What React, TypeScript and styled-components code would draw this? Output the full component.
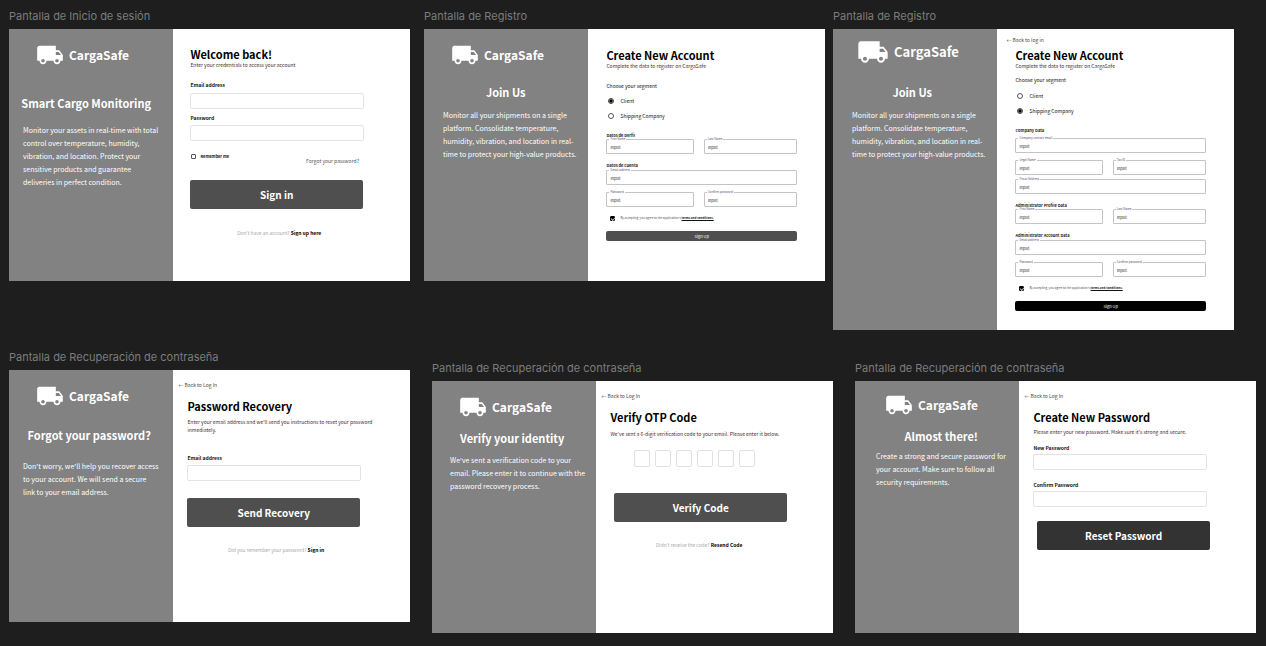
import React, { useId } from "react";
import styled, { createGlobalStyle } from "styled-components";
import { MdLocalShipping } from "react-icons/md";

const sans = `"Noto Sans CJK SC", "Noto Sans", sans-serif`;

const GlobalStyle = createGlobalStyle`
  * { box-sizing: border-box; }
  body { margin: 0; background: #1e1e1e; font-family: ${sans}; }
  button, input { font-family: inherit; margin: 0; }
  h2, h3, p { margin: 0; }
`;

/* ---------- canvas ---------- */

const Canvas = styled.main`
  background: #1e1e1e;
  min-height: 100vh;
  padding: 8px 0 12px;
  overflow: hidden;
`;

const BoardRow = styled.div<{ $top?: number; $right: number }>`
  display: flex;
  align-items: flex-start;
  padding-left: 9px;
  padding-right: ${(p) => p.$right}px;
  margin-top: ${(p) => p.$top ?? 0}px;
`;

const Board = styled.section<{ $gap?: number; $drop?: number }>`
  flex: 1 1 0;
  min-width: 0;
  margin-left: ${(p) => p.$gap ?? 0}px;
  margin-top: ${(p) => p.$drop ?? 0}px;
`;

const BoardName = styled.div`
  font-family: Inter, sans-serif;
  font-size: 11px;
  line-height: 16px;
  height: 21px;
  color: #7c7c7c;
  white-space: nowrap;
`;

const Frame = styled.div`
  display: grid;
  grid-template-columns: 41fr 59fr;
  min-height: 252px;
  background: #fff;
`;

/* ---------- brand side ---------- */

const Brand = styled.aside`
  background: #828282;
  color: #fff;
  min-width: 0;
`;

const Logo = styled.div<{ $top: number; $left: number; $large?: boolean }>`
  display: flex;
  align-items: center;
  gap: 5px;
  padding-top: ${(p) => p.$top}px;
  padding-left: ${(p) => p.$left}px;
  font-size: ${(p) => (p.$large ? 13 : 12)}px;
  font-weight: 700;
  line-height: 16px;

  svg {
    display: block;
    flex: none;
    width: ${(p) => (p.$large ? 32 : 28)}px;
    height: ${(p) => (p.$large ? 32 : 28)}px;
  }
`;

const Copy = styled.div<{ $left: number; $right: number }>`
  padding-left: ${(p) => p.$left}px;
  padding-right: ${(p) => p.$right}px;
`;

const Headline = styled.h2<{ $top: number }>`
  margin-top: ${(p) => p.$top}px;
  display: flex;
  justify-content: center;
  font-size: 11px;
  font-weight: 700;
  line-height: 16px;
  white-space: nowrap;
`;

const Pitch = styled.p<{ $top: number }>`
  margin-top: ${(p) => p.$top}px;
  font-size: 7px;
  line-height: 13px;
  white-space: pre;
`;

/* ---------- form side ---------- */

type Top = { $top?: number };

const Form = styled.form<{ $right: number; $left: number }>`
  display: flex;
  flex-direction: column;
  min-width: 0;
  padding: 0 ${(p) => p.$right}px 19px ${(p) => p.$left}px;
`;

const Title = styled.h3<Top>`
  margin-top: ${(p) => p.$top ?? 0}px;
  font-size: 11px;
  font-weight: 700;
  line-height: 12px;
  color: #000;
  white-space: nowrap;
`;

const Subtitle = styled.p<Top>`
  margin-top: ${(p) => p.$top ?? 0}px;
  font-size: 5px;
  line-height: 8px;
  color: #4a2b30;
  white-space: pre;
`;

const BackLink = styled.a<Top>`
  margin-top: ${(p) => p.$top ?? 0}px;
  margin-left: -9px;
  align-self: flex-start;
  font-size: 5px;
  line-height: 8px;
  color: #444;
  text-decoration: none;
`;

const Label = styled.label<Top>`
  margin-top: ${(p) => p.$top ?? 0}px;
  font-size: 5px;
  font-weight: 700;
  line-height: 8px;
  color: #111;
`;

const TextBox = styled.input<Top>`
  margin-top: ${(p) => p.$top ?? 0}px;
  width: 100%;
  height: 16px;
  padding: 0 4px;
  font-size: 6px;
  background: #fff;
  border: 1px solid #e3e3e3;
  border-radius: 2px;
  outline: none;
`;

const PrimaryButton = styled.button<Top & { $dark?: boolean; $shift?: number }>`
  margin-top: ${(p) => p.$top ?? 0}px;
  margin-left: ${(p) => p.$shift ?? 0}px;
  margin-right: ${(p) => 1 - (p.$shift ?? 0)}px;
  height: 29px;
  padding: 0;
  border: 0;
  border-radius: 2px;
  background: ${(p) => (p.$dark ? "#333" : "#4f4f4f")};
  color: #fff;
  font-size: 10px;
  font-weight: 700;
  line-height: 16px;
`;

const SubmitButton = styled.button<{ $black?: boolean }>`
  margin-top: 9px;
  height: 10px;
  padding: 0;
  border: 0;
  border-radius: 2px;
  background: ${(p) => (p.$black ? "#000" : "#4f4f4f")};
  color: #fff;
  font-size: 4px;
  line-height: 8px;
`;

const Footnote = styled.p<Top>`
  margin-top: ${(p) => p.$top ?? 0}px;
  padding-left: 4px;
  font-size: 5px;
  line-height: 10px;
  font-weight: 300;
  color: #777;
  text-align: center;
  white-space: nowrap;

  a {
    color: #000;
    font-weight: 700;
    text-decoration: none;
  }
`;

const OptionsRow = styled.div`
  display: flex;
  justify-content: space-between;
  height: 13px;
  margin-top: 11px;
  padding-right: 5px;
`;

const Remember = styled.label`
  display: flex;
  align-items: center;
  gap: 4px;
  height: 8px;
  padding-left: 1px;
  font-size: 4px;
  font-weight: 700;
  line-height: 8px;
  color: #111;
`;

const ForgotLink = styled.a`
  align-self: flex-end;
  font-size: 5px;
  line-height: 8px;
  color: #555;
  text-decoration: none;
`;

const Tick = styled.input`
  appearance: none;
  flex: none;
  display: grid;
  place-items: center;
  width: 5px;
  height: 5px;
  border: 1px solid #555;
  border-radius: 1px;
  background: #fff;

  &:checked {
    background: #000;
    border-color: #000;
  }
  &:checked::after {
    content: "";
    width: 3px;
    height: 2px;
    border-left: 1px solid #bbb;
    border-bottom: 1px solid #bbb;
    transform: rotate(-45deg);
  }
`;

const Radio = styled.input`
  appearance: none;
  flex: none;
  display: grid;
  place-items: center;
  width: 6px;
  height: 6px;
  border: 1px solid #555;
  border-radius: 50%;
  background: #fff;

  &:checked {
    border-color: #444;
    background: radial-gradient(circle, #000 1px, #999 2px);
  }
`;

const Prompt = styled.p<Top>`
  margin-top: ${(p) => p.$top ?? 0}px;
  font-size: 5px;
  line-height: 8px;
  color: #111;
`;

const RadioLine = styled.label<Top>`
  display: flex;
  align-items: center;
  gap: 6px;
  margin-top: ${(p) => p.$top ?? 7}px;
  padding-left: 2px;
  font-size: 5px;
  line-height: 8px;
  color: #111;
`;

const GroupName = styled.p<Top>`
  margin-top: ${(p) => p.$top ?? 7}px;
  font-size: 4px;
  font-weight: 700;
  line-height: 8px;
  color: #222;
`;

const FieldRow = styled.div<Top>`
  display: grid;
  grid-template-columns: 87fr 93fr;
  gap: 10px;
  margin-top: ${(p) => p.$top ?? 0}px;
`;

const FieldWrap = styled.div<Top>`
  position: relative;
  min-width: 0;
  margin-top: ${(p) => p.$top ?? 0}px;

  label {
    position: absolute;
    top: -2px;
    left: 3px;
    padding: 0 1px;
    background: #fff;
    font-size: 3px;
    line-height: 4px;
    color: #6a4a78;
    white-space: nowrap;
  }

  input {
    display: block;
    width: 100%;
    height: 15px;
    padding: 0 3px;
    border: 1px solid #c4c4c4;
    border-radius: 1px;
    background: #fff;
    font-size: 4px;
    color: #222;
    outline: none;
  }
`;

const Terms = styled.label`
  display: flex;
  align-items: center;
  gap: 5px;
  margin-top: 7px;
  padding-left: 4px;
  font-size: 3px;
  line-height: 8px;
  color: #555;
  white-space: nowrap;

  a {
    color: #111;
    font-weight: 700;
  }
`;

const CodeRow = styled.div`
  display: flex;
  gap: 5px;
  margin-top: 12px;
  padding-left: 24px;
`;

const CodeBox = styled.input`
  width: 16px;
  height: 17px;
  padding: 0;
  border: 1px solid #e0e0e0;
  border-radius: 2px;
  text-align: center;
  font-size: 8px;
  outline: none;
`;

/* ---------- composed parts ---------- */

function OutlinedField({ name, top }: { name: string; top?: number }) {
  const id = useId();
  return (
    <FieldWrap $top={top}>
      <input id={id} type="text" defaultValue="Input" />
      <label htmlFor={id}>{name}</label>
    </FieldWrap>
  );
}

function LabeledBox({
  name,
  type,
  top,
  gap,
}: {
  name: string;
  type: string;
  top: number;
  gap: number;
}) {
  const id = useId();
  return (
    <>
      <Label htmlFor={id} $top={top}>
        {name}
      </Label>
      <TextBox id={id} type={type} $top={gap} />
    </>
  );
}

type BrandProps = {
  logo: [top: number, left: number];
  large?: boolean;
  inset: [left: number, right: number];
  titleTop: number;
  title: string;
  textTop: number;
  lines: string[];
};

function BrandSide({ logo, large, inset, titleTop, title, textTop, lines }: BrandProps) {
  return (
    <Brand>
      <Logo $top={logo[0]} $left={logo[1]} $large={large}>
        <MdLocalShipping />
        CargaSafe
      </Logo>
      <Copy $left={inset[0]} $right={inset[1]}>
        <Headline $top={titleTop}>{title}</Headline>
        <Pitch $top={textTop}>{lines.join("\n")}</Pitch>
      </Copy>
    </Brand>
  );
}

function Segment({ group, company, top }: { group: string; company?: boolean; top: number }) {
  return (
    <>
      <RadioLine $top={top}>
        <Radio type="radio" name={group} defaultChecked={!company} />
        Client
      </RadioLine>
      <RadioLine>
        <Radio type="radio" name={group} defaultChecked={company} />
        Shipping Company
      </RadioLine>
    </>
  );
}

function TermsLine() {
  return (
    <Terms>
      <Tick type="checkbox" defaultChecked />
      <span>
        By accepting, you agree to the application's <a href="#terms">terms and conditions.</a>
      </span>
    </Terms>
  );
}

const joinLines = [
  "Monitor all your shipments on a single",
  "platform. Consolidate temperature,",
  "humidity, vibration, and location in real-",
  "time to protect your high-value products.",
];

export default function App() {
  return (
    <Canvas>
      <GlobalStyle />
      <BoardRow $right={32}>
        <Board>
          <BoardName>Pantalla de Inicio de sesión</BoardName>
          <Frame>
            <BrandSide
              logo={[12, 27]}
              inset={[14, 24]}
              titleTop={26}
              title="Smart Cargo Monitoring"
              textTop={13}
              lines={[
                "Monitor your assets in real-time with total",
                "control over temperature, humidity,",
                "vibration, and location. Protect your",
                "sensitive products and guarantee",
                "deliveries in perfect condition.",
              ]}
            />
            <Form $left={17} $right={46}>
              <Title $top={19}>Welcome back!</Title>
              <Subtitle $top={1}>Enter your credentials to access your account</Subtitle>
              <LabeledBox name="Email address" type="email" top={12} gap={4} />
              <LabeledBox name="Password" type="password" top={5} gap={3} />
              <OptionsRow>
                <Remember>
                  <Tick type="checkbox" />
                  Remember me
                </Remember>
                <ForgotLink href="#forgot">Forgot your password?</ForgotLink>
              </OptionsRow>
              <PrimaryButton type="button" $top={15}>
                Sign in
              </PrimaryButton>
              <Footnote $top={19}>
                Don't have an account? <a href="#signup">Sign up here</a>
              </Footnote>
            </Form>
          </Frame>
        </Board>

        <Board $gap={14}>
          <BoardName>Pantalla de Registro</BoardName>
          <Frame>
            <BrandSide
              logo={[12, 27]}
              inset={[19, 20]}
              titleTop={15}
              title="Join Us"
              textTop={9}
              lines={joinLines}
            />
            <Form $left={18} $right={28}>
              <Title $top={20}>Create New Account</Title>
              <Subtitle $top={1}>Complete the data to register on CargaSafe</Subtitle>
              <Prompt $top={12}>Choose your segment</Prompt>
              <Segment group="segment-client" top={7} />
              <GroupName $top={11}>Datos de perfil</GroupName>
              <FieldRow>
                <OutlinedField name="First Name" />
                <OutlinedField name="Last Name" />
              </FieldRow>
              <GroupName>Datos de cuenta</GroupName>
              <OutlinedField name="Email address" top={1} />
              <FieldRow $top={7}>
                <OutlinedField name="Password" />
                <OutlinedField name="Confirm password" />
              </FieldRow>
              <TermsLine />
              <SubmitButton type="button">Sign Up</SubmitButton>
            </Form>
          </Frame>
        </Board>

        <Board $gap={8}>
          <BoardName>Pantalla de Registro</BoardName>
          <Frame>
            <BrandSide
              logo={[7, 24]}
              large
              inset={[19, 25]}
              titleTop={16}
              title="Join Us"
              textTop={9}
              lines={joinLines}
            />
            <Form $left={18} $right={28}>
              <BackLink href="#login" $top={7}>
                ← Back to log in
              </BackLink>
              <Title $top={5}>Create New Account</Title>
              <Subtitle $top={1}>Complete the data to register on CargaSafe</Subtitle>
              <Prompt $top={6}>Choose your segment</Prompt>
              <Segment group="segment-company" company top={8} />
              <GroupName $top={11}>Company Data</GroupName>
              <OutlinedField name="Company contact email" top={4} />
              <FieldRow $top={7}>
                <OutlinedField name="Legal Name" />
                <OutlinedField name="Tax ID" />
              </FieldRow>
              <OutlinedField name="Fiscal Address" top={4} />
              <GroupName>Administrator Profile Data</GroupName>
              <FieldRow>
                <OutlinedField name="First Name" />
                <OutlinedField name="Last Name" />
              </FieldRow>
              <GroupName>Administrator Account Data</GroupName>
              <OutlinedField name="Email address" top={1} />
              <FieldRow $top={7}>
                <OutlinedField name="Password" />
                <OutlinedField name="Confirm password" />
              </FieldRow>
              <TermsLine />
              <SubmitButton type="button" $black>
                Sign Up
              </SubmitButton>
            </Form>
          </Frame>
        </Board>
      </BoardRow>

      <BoardRow $top={19} $right={10}>
        <Board>
          <BoardName>Pantalla de Recuperación de contraseña</BoardName>
          <Frame>
            <BrandSide
              logo={[12, 27]}
              inset={[14, 18]}
              titleTop={17}
              title="Forgot your password?"
              textTop={17}
              lines={[
                "Don't worry, we'll help you recover access",
                "to your account. We will send a secure",
                "link to your email address.",
              ]}
            />
            <Form $left={14} $right={49}>
              <BackLink href="#login" $top={11}>
                ← Back to Log In
              </BackLink>
              <Title $top={11}>Password Recovery</Title>
              <Subtitle $top={6}>
                {"Enter your email address and we'll send you instructions to reset your password\ninmediately."}
              </Subtitle>
              <LabeledBox name="Email address" type="email" top={20} gap={3} />
              <PrimaryButton type="button" $top={17}>
                Send Recovery
              </PrimaryButton>
              <Footnote $top={18}>
                Did you remember your password? <a href="#signin">Sign in</a>
              </Footnote>
            </Form>
          </Frame>
        </Board>

        <Board $gap={22} $drop={11}>
          <BoardName>Pantalla de Recuperación de contraseña</BoardName>
          <Frame>
            <BrandSide
              logo={[12, 27]}
              inset={[18, 22]}
              titleTop={9}
              title="Verify your identity"
              textTop={8}
              lines={[
                "We've sent a verification code to your",
                "email. Please enter it to continue with the",
                "password recovery process.",
              ]}
            />
            <Form $left={14} $right={49}>
              <BackLink href="#login" $top={11}>
                ← Back to Log In
              </BackLink>
              <Title $top={11}>Verify OTP Code</Title>
              <Subtitle $top={7}>
                We've sent a 6-digit verification code to your email. Please enter it below.
              </Subtitle>
              <CodeRow>
                {[1, 2, 3, 4, 5, 6].map((n) => (
                  <CodeBox key={n} maxLength={1} aria-label={`Digit ${n}`} />
                ))}
              </CodeRow>
              <PrimaryButton type="button" $top={26} $shift={4}>
                Verify Code
              </PrimaryButton>
              <Footnote $top={18}>
                Didn't receive the code? <a href="#resend">Resend Code</a>
              </Footnote>
            </Form>
          </Frame>
        </Board>

        <Board $gap={22} $drop={11}>
          <BoardName>Pantalla de Recuperación de contraseña</BoardName>
          <Frame>
            <BrandSide
              logo={[10, 30]}
              inset={[21, 13]}
              titleTop={9}
              title="Almost there!"
              textTop={6}
              lines={[
                "Create a strong and secure password for",
                "your account. Make sure to follow all",
                "security requirements.",
              ]}
            />
            <Form $left={14} $right={49}>
              <BackLink href="#login" $top={11}>
                ← Back to Log In
              </BackLink>
              <Title $top={11}>Create New Password</Title>
              <Subtitle $top={5}>
                Please enter your new password. Make sure it's strong and secure.
              </Subtitle>
              <LabeledBox name="New Password" type="password" top={8} gap={2} />
              <LabeledBox name="Confirm Password" type="password" top={11} gap={2} />
              <PrimaryButton type="button" $top={14} $shift={4} $dark>
                Reset Password
              </PrimaryButton>
            </Form>
          </Frame>
        </Board>
      </BoardRow>
    </Canvas>
  );
}
